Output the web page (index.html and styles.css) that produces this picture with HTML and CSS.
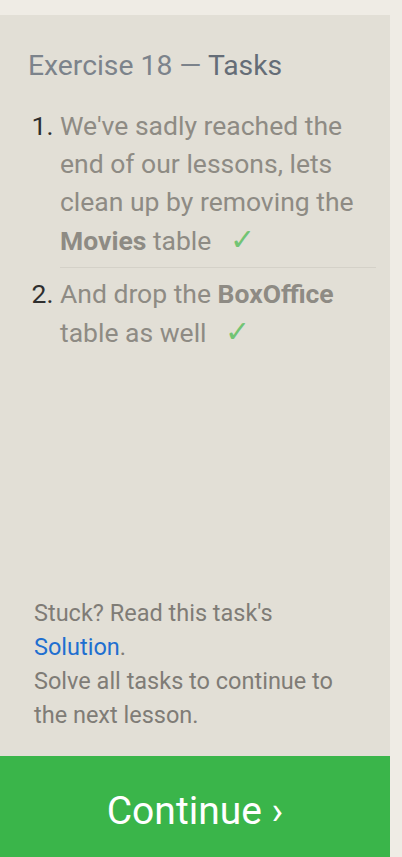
FILE: index.html
```html
<!DOCTYPE html>
<html>
<head>
<meta charset="utf-8">
<link rel="stylesheet" href="styles.css">
</head>
<body>
<div class="panel">
  <div class="content">
    <h2 class="title">Exercise 18 — <span class="title-strong">Tasks</span></h2>
    <ol class="tasks">
      <li class="task">We've sadly reached the end of our lessons, lets clean up by removing the <b>Movies</b> table <span class="check">✓</span></li>
      <li class="task">And drop the <b>BoxOffice</b> table as well <span class="check">✓</span></li>
    </ol>
  </div>
  <div class="help">
    <p>Stuck? Read this task's <a class="link" href="#">Solution</a>.</p>
    <p>Solve all tasks to continue to the next lesson.</p>
  </div>
  <div class="continue">Continue ›</div>
</div>
</body>
</html>
```

FILE: styles.css
```css
html, body {
  margin: 0;
  padding: 0;
}
body {
  background: #efece5;
  font-family: Roboto, "Liberation Sans", sans-serif;
  height: 857px;
  overflow: hidden;
}
.panel {
  margin-top: 15px;
  width: 390px;
  height: 851px;
  background: #e2dfd6;
  display: flex;
  flex-direction: column;
}
.content {
  flex: 1;
  padding: 36px 14px 0 28px;
}
.title {
  margin: 0;
  font-size: 28.3px;
  line-height: 30px;
  font-weight: 400;
  color: #7c838b;
}
.title-strong {
  color: #656d77;
}
.tasks {
  margin: 26px 0 0 0;
  padding: 0 0 0 32px;
  font-size: 26.5px;
  line-height: 38px;
  color: #8e8b84;
}
.task {
  padding-bottom: 7px;
}
.task::marker {
  color: #2e2e2e;
}
.task + .task {
  border-top: 1px solid #d4d1c8;
  padding-top: 7px;
}
.task b {
  font-weight: 700;
}
.check {
  color: #72c474;
  font-size: 30px;
  margin-left: 12px;
}
.help {
  padding: 0 28px 24px 34px;
  font-size: 23.5px;
  line-height: 34px;
  color: #7f7c76;
}
.help p {
  margin: 0;
}
.link {
  color: #1f6fd0;
  text-decoration: none;
}
.continue {
  height: 110px;
  flex: none;
  background: #3ab54a;
  color: #ffffff;
  font-size: 39px;
  display: flex;
  align-items: center;
  justify-content: center;
}
```
